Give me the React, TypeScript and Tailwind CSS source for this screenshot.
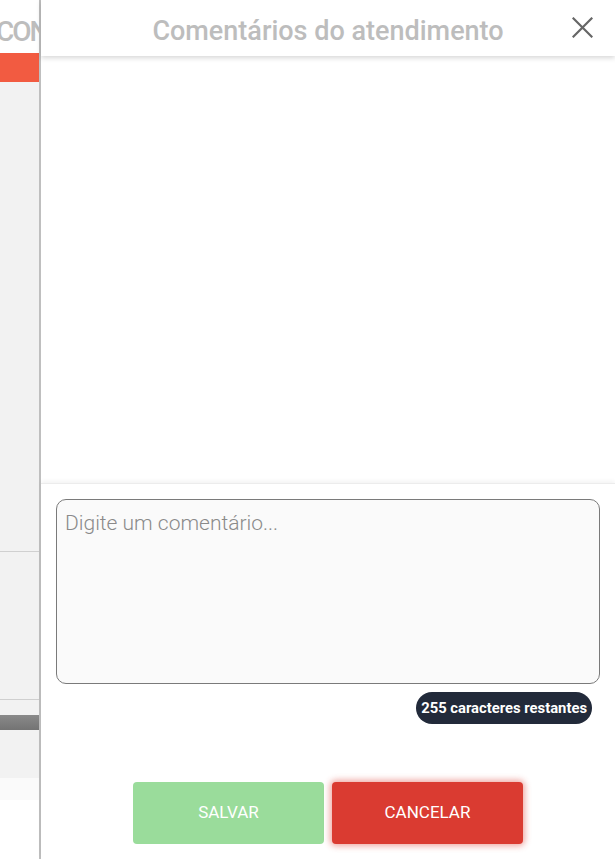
import React from "react";

export default function App() {
  return (
    <div className="flex h-[859px] w-[615px] overflow-hidden bg-white" style={{ fontFamily: "Roboto, 'Noto Sans', sans-serif" }}>
      {/* left background page */}
      <div className="flex w-[39px] shrink-0 flex-col overflow-hidden">
        <div className="h-[53px] shrink-0 overflow-hidden whitespace-nowrap bg-white pt-[17px]">
          <span className="ml-[-4px] block text-[28px] font-medium leading-[30px] tracking-[-2px] text-[#bdbdbd]">CONSULTA</span>
        </div>
        <div className="h-[29px] shrink-0 bg-[#f25b41]" />
        <div className="h-[469px] shrink-0 bg-[#f2f2f2]" />
        <div className="h-px shrink-0 bg-[#d0d0d0]" />
        <div className="h-[147px] shrink-0 bg-[#f2f2f2]" />
        <div className="h-px shrink-0 bg-[#cfcfcf]" />
        <div className="h-[15px] shrink-0 bg-[#f2f2f2]" />
        <div className="h-[15px] shrink-0 bg-gradient-to-b from-[#8a8a8a] to-[#737373]" />
        <div className="h-[48px] shrink-0 bg-[#f2f2f2]" />
        <div className="h-[22px] shrink-0 bg-[#fafafa]" />
        <div className="flex-1 bg-white" />
      </div>
      <div className="w-[2px] shrink-0 bg-[#bfbfbf]" />
      {/* right panel */}
      <div className="flex min-w-0 flex-1 flex-col bg-white">
        <div className="relative z-10 flex h-[56px] shrink-0 items-center justify-center bg-white shadow-[0_2px_5px_rgba(0,0,0,0.16)]">
          <h1 className="mt-[7px] text-[27px] font-medium leading-none text-[#bdbdbd]">Comentários do atendimento</h1>
          <button className="absolute right-[22px] top-[16px] flex h-[22px] w-[22px] items-center justify-center text-[#666666]">
            <svg width="21" height="21" viewBox="0 0 21 21" fill="none" stroke="currentColor" strokeWidth="2.2" strokeLinecap="square">
              <path d="M1.5 1.5 L19.5 19.5 M19.5 1.5 L1.5 19.5" />
            </svg>
          </button>
        </div>
        <div className="h-[427px] shrink-0 bg-white" />
        <div className="flex flex-1 flex-col border-t border-[#ececec] px-[15px] pt-[15px] shadow-[0_-2px_4px_rgba(0,0,0,0.05)]">
          <textarea
            placeholder="Digite um comentário..."
            className="h-[185px] w-full resize-none rounded-[10px] border border-[#7a7a7a] bg-[#fafafa] px-[8px] py-[10px] text-[21px] font-light leading-[26px] text-[#555] outline-none placeholder:text-[#8a8a8a]"
          />
          <div className="mt-[8px] flex justify-end pr-[8px]">
            <span className="flex h-[32px] items-center rounded-full bg-[#222a3a] px-[5px] text-[14.8px] font-bold text-white">
              255 caracteres restantes
            </span>
          </div>
          <div className="mt-[58px] flex justify-center gap-[8px]">
            <button className="flex h-[62px] w-[191px] items-center justify-center rounded-[4px] bg-[#9adc9b] text-[17px] text-white">
              SALVAR
            </button>
            <button className="flex h-[62px] w-[191px] items-center justify-center rounded-[4px] bg-[#da3b31] text-[17px] text-white shadow-[0_0_6px_2px_rgba(218,59,49,0.45)]">
              CANCELAR
            </button>
          </div>
        </div>
      </div>
    </div>
  );
}
